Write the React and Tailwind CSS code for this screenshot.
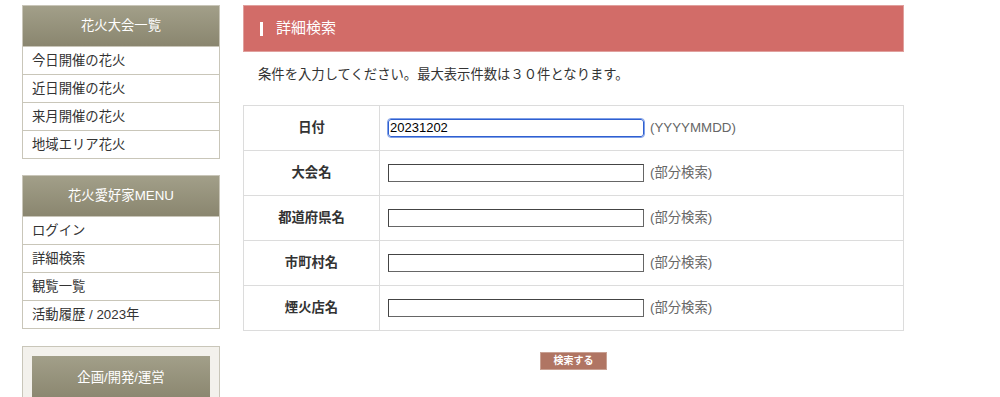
import React from 'react';

const jp = { fontFamily: '"Liberation Sans", "Noto Sans CJK JP", "Noto Sans", sans-serif' };

const SideBox = ({ title, items }) => (
  <div className="border border-[#c9c6b9] bg-white">
    <div className="h-[40px] flex items-center justify-center bg-gradient-to-b from-[#a29f89] to-[#8a866f] text-white text-[13.33px]">
      {title}
    </div>
    {items.map((t) => (
      <div key={t} className="h-[28px] flex items-center pl-[9px] border-t border-[#c9c6b9] text-[13.33px] text-[#333]">
        {t}
      </div>
    ))}
  </div>
);

const rows = [
  { label: '日付', value: '20231202', hint: '(YYYYMMDD)', focus: true },
  { label: '大会名', value: '', hint: '(部分検索)' },
  { label: '都道府県名', value: '', hint: '(部分検索)' },
  { label: '市町村名', value: '', hint: '(部分検索)' },
  { label: '煙火店名', value: '', hint: '(部分検索)' },
];

const App = () => {
  return (
    <div className="w-[1000px] h-[397px] overflow-hidden bg-white flex" style={jp}>
      {/* サイドメニュー */}
      <div className="w-[198px] ml-[22px] pt-[5px] flex flex-col gap-[16px] shrink-0">
        <SideBox title="花火大会一覧" items={['今日開催の花火', '近日開催の花火', '来月開催の花火', '地域エリア花火']} />
        <SideBox title="花火愛好家MENU" items={['ログイン', '詳細検索', '観覧一覧', '活動履歴 / 2023年']} />
        <div className="border border-[#c9c6b9] bg-[#f3f1ec] px-[9px] pt-[9px] mt-[1px]">
          <div className="h-[44px] flex items-center justify-center bg-gradient-to-b from-[#a29f89] to-[#8a866f] text-white text-[13.33px]">
            企画/開発/運営
          </div>
        </div>
      </div>

      {/* メイン */}
      <div className="w-[661px] ml-[23px] pt-[5px]">
        <div className="h-[47px] bg-[#d26c68] border border-[#e0a09d] flex items-center pl-[16px]">
          <span className="w-[3px] h-[14px] bg-white mr-[13px]"></span>
          <span className="text-white text-[15px]">詳細検索</span>
        </div>
        <p className="mt-[13px] ml-[15px] text-[13.33px] text-[#333]">条件を入力してください。最大表示件数は３０件となります。</p>
        <table className="mt-[20px] w-[661px] border-collapse border border-[#dcdcdc] text-[13.33px]">
          <tbody>
            {rows.map((r) => (
              <tr key={r.label} className="h-[45px]">
                <td className="w-[136px] border border-[#dcdcdc] text-center font-bold text-[#333]">{r.label}</td>
                <td className="border border-[#dcdcdc] pl-[8px]">
                  <div className="flex items-center">
                    <input
                      readOnly
                      value={r.value}
                      className={
                        r.focus
                          ? 'w-[256px] h-[18px] border border-[#2f5fd0] rounded-[3px] outline outline-1 outline-[#7fa0e8] px-[1px] text-[13px] text-black'
                          : 'w-[256px] h-[18px] border border-[#666] border-t-[#444] border-l-[#444] px-[1px] text-[13px]'
                      }
                    />
                    <span className="ml-[6px] text-[#666]">{r.hint}</span>
                  </div>
                </td>
              </tr>
            ))}
          </tbody>
        </table>
        <div className="flex justify-center mt-[21px]">
          <button className="w-[67px] h-[18px] bg-[#b07563] border border-[#c9a193] text-white text-[10px] font-bold leading-none">
            検索する
          </button>
        </div>
      </div>
    </div>
  );
};

export default App;
